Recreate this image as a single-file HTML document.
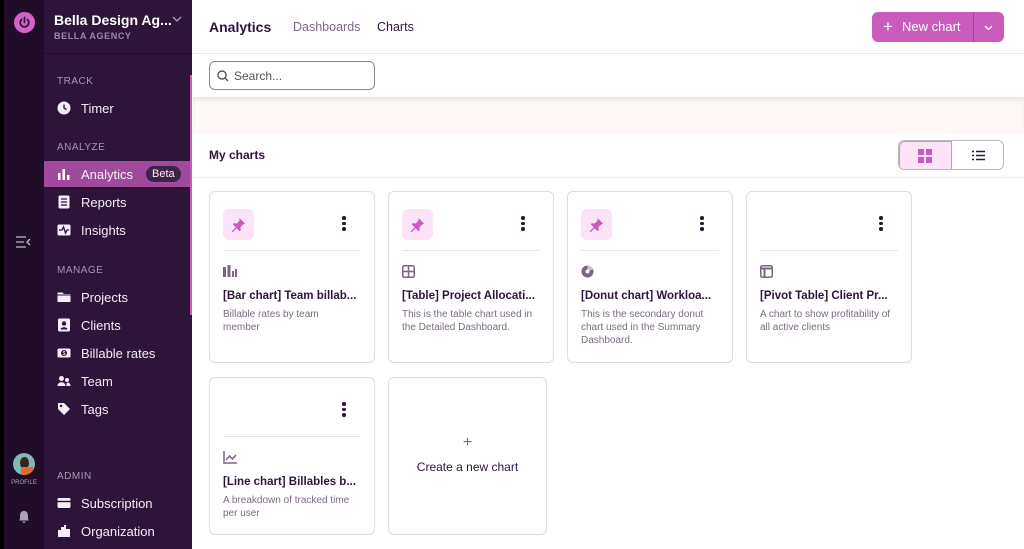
<!DOCTYPE html><html><head><style>
*{box-sizing:border-box;margin:0;padding:0}
body{width:1024px;height:549px;overflow:hidden;font-family:"Liberation Sans",sans-serif;background:#fff;position:relative}
.strip{position:absolute;left:0;top:0;width:4px;height:549px;background:#000}
.rail{position:absolute;left:4px;top:0;width:40px;height:549px;background:#200e29}
.side{position:absolute;left:44px;top:0;width:148px;height:549px;background:#2d1539;color:#fff}
.pl{position:absolute;left:190px;top:75px;width:2px;height:240px;background:#c95bbd}
.sec{position:absolute;left:13px;font-size:10px;color:#a898ad;letter-spacing:.5px}
.it{position:absolute;left:0;width:146px;height:26px;font-size:13px;color:#f4eef5;display:flex;align-items:center;padding-left:37px}
.it svg{position:absolute;left:13px;top:6px;width:14px;height:14px}
.main{position:absolute;left:193px;top:0;right:0;bottom:0}
.card{position:absolute;border:1px solid #ddd;border-radius:6px;background:#fff}
.pin{position:absolute;left:13px;top:17px;width:31px;height:31px;border-radius:6px;background:#fce3f8}
.pin svg{position:absolute;left:8px;top:8px}
.dots{position:absolute;right:28px;top:24px;width:4px}
.dots b{display:block;width:3.5px;height:3.5px;border-radius:50%;background:#2d1539;margin-bottom:2px}
.hr{position:absolute;left:13px;right:13px;top:58px;border-top:1px solid #e6e6e6}
.ic{position:absolute;left:13px;top:73px}
.tt{position:absolute;left:13px;top:98px;font-size:11.5px;font-weight:bold;color:#2d1539;white-space:nowrap}
.ds{position:absolute;left:13px;top:116px;width:135px;font-size:10px;line-height:13px;color:#7d6a82}
</style></head><body>
<div class="strip"></div>
<div class="rail">
<div style="position:absolute;left:10px;top:12px;width:21px;height:21px;border-radius:50%;background:#d463c8"><svg width="21" height="21" viewBox="0 0 21 21"><path d="M7.5 7.5a4.3 4.3 0 1 0 6 0" fill="none" stroke="#2d1539" stroke-width="1.8" stroke-linecap="round"/><path d="M10.5 5.5v5" stroke="#2d1539" stroke-width="1.8" stroke-linecap="round"/></svg></div>
<svg style="position:absolute;left:11px;top:236px" width="16" height="12"><path d="M1 1h10M1 6h8M1 11h10M15 3l-3 3 3 3" stroke="#bbb" stroke-width="1.3" fill="none"/></svg>
<div style="position:absolute;left:9px;top:453px;width:22px;height:22px;border-radius:50%;background:#7fb8b8;overflow:hidden"><div style="position:absolute;left:7px;top:4px;width:9px;height:12px;border-radius:50%;background:#3a2418"></div><div style="position:absolute;left:8px;top:14px;width:12px;height:10px;background:#e86a2a"></div></div>
<div style="position:absolute;left:0;width:40px;top:480px;text-align:center;font-size:6px;color:#b0a0b6">PROFILE</div>
<svg style="position:absolute;left:14px;top:510px" width="12" height="13"><path d="M6 1c-3 0-4 2-4 5v3l-1 1.5h10L10 9V6c0-3-1-5-4-5zM4.5 11.5h3a1.5 1.5 0 0 1-3 0z" fill="#b0a0b6"/></svg>
</div>
<div class="side">
<div style="position:absolute;left:10px;top:12px;font-size:14px;font-weight:bold">Bella Design Ag...</div>
<svg style="position:absolute;left:128px;top:16px" width="10" height="6"><path d="M1 1l4 4 4-4" stroke="#aaa" stroke-width="1.3" fill="none"/></svg>
<div style="position:absolute;left:10px;top:31px;font-size:9px;color:#9d8aa4;letter-spacing:.6px;font-weight:bold">BELLA AGENCY</div>
<div style="position:absolute;left:0;top:53px;width:148px;border-top:1px solid #1f0d28"></div>
<div class="sec" style="top:76px">TRACK</div>
<div class="it" style="top:95px"><svg viewBox="0 0 14 14"><circle cx="7" cy="7" r="6.5" fill="#f4eef5"/><path d="M7 3.5V7l2.5 1.5" stroke="#2d1539" stroke-width="1.4" fill="none"/></svg>Timer</div>
<div class="sec" style="top:142px">ANALYZE</div>
<div class="it" style="top:161px;background:#a04a9e"><svg viewBox="0 0 14 14"><path d="M1 6h2.5v7H1zM5.5 2h2.5v11H5.5zM10 8h2.5v5H10z" fill="#fff"/></svg>Analytics<span style="margin-left:13px;background:#3d2344;border-radius:8px;padding:2px 6px;font-size:11px">Beta</span></div>
<div class="it" style="top:189px"><svg viewBox="0 0 14 14"><rect x="1.5" y="0.5" width="11" height="13" rx="1.5" fill="#f4eef5"/><path d="M4 4h6M4 7h6M4 10h6" stroke="#2d1539" stroke-width="1.2"/></svg>Reports</div>
<div class="it" style="top:217px"><svg viewBox="0 0 14 14"><rect x="0.5" y="1.5" width="13" height="11" rx="1.5" fill="#f4eef5"/><path d="M2 7h3l1.5-3 2 6 1.5-3h2" stroke="#2d1539" stroke-width="1.3" fill="none"/></svg>Insights</div>
<div class="sec" style="top:265px">MANAGE</div>
<div class="it" style="top:284px"><svg viewBox="0 0 14 14"><path d="M0.5 2.5h5l1.5 1.5h6.5v8h-13z" fill="#f4eef5"/><path d="M0.5 5h13" stroke="#2d1539"/></svg>Projects</div>
<div class="it" style="top:312px"><svg viewBox="0 0 14 14"><rect x="1" y="0.5" width="12" height="13" rx="1.5" fill="#f4eef5"/><circle cx="7" cy="5.5" r="2.2" fill="#2d1539"/><path d="M3.5 11.5c0-3 7-3 7 0z" fill="#2d1539"/></svg>Clients</div>
<div class="it" style="top:340px"><svg viewBox="0 0 14 14"><rect x="0.5" y="2.5" width="13" height="9" rx="1.5" fill="#f4eef5"/><circle cx="7" cy="7" r="3" fill="#2d1539"/><text x="7" y="9" font-size="5" fill="#fff" text-anchor="middle">$</text></svg>Billable rates</div>
<div class="it" style="top:368px"><svg viewBox="0 0 14 14"><circle cx="4.5" cy="4.5" r="2.5" fill="#f4eef5"/><path d="M0.5 12c0-5 8-5 8 0z" fill="#f4eef5"/><circle cx="10" cy="6" r="2" fill="#f4eef5"/><path d="M9.5 12h4c0-3-2-4-4-3z" fill="#f4eef5"/></svg>Team</div>
<div class="it" style="top:396px"><svg viewBox="0 0 14 14"><path d="M1 1h6l6 6-6 6-6-6z" fill="#f4eef5"/><circle cx="4" cy="4" r="1.2" fill="#2d1539"/></svg>Tags</div>
<div class="sec" style="top:471px">ADMIN</div>
<div class="it" style="top:490px"><svg viewBox="0 0 14 14"><rect x="0.5" y="2" width="13" height="10" rx="1.5" fill="#f4eef5"/><path d="M0.5 5.5h13" stroke="#2d1539" stroke-width="1.5"/></svg>Subscription</div>
<div class="it" style="top:518px"><svg viewBox="0 0 14 14"><path d="M1 13V6h3V3h3V1h2v4h4v8z" fill="#f4eef5"/></svg>Organization</div>
</div>
<div class="pl"></div>
<div class="main">
<div style="position:absolute;left:16px;top:19px;font-size:14px;font-weight:bold;color:#2d1539">Analytics</div>
<div style="position:absolute;left:100px;top:20px;font-size:12.5px;color:#7d6a82">Dashboards</div>
<div style="position:absolute;left:184px;top:20px;font-size:12.5px;color:#2d1539">Charts</div>
<div style="position:absolute;left:679px;top:12px;width:132px;height:30px;border-radius:6px;background:#c95bbd;color:#fff;font-size:13px;line-height:30px">
<span style="position:absolute;left:11px;font-size:17px">+</span><span style="position:absolute;left:30px">New chart</span>
<span style="position:absolute;left:101px;top:0;height:30px;border-left:1px solid #a8439c"></span>
<svg style="position:absolute;left:112px;top:13px" width="9" height="6"><path d="M1 1l3.5 3.5L8 1" stroke="#fff" stroke-width="1.3" fill="none"/></svg></div>
<div style="position:absolute;left:0;right:0;top:53px;border-top:1px solid #e8e8e8"></div>
<div style="position:absolute;left:16px;top:61px;width:166px;height:29px;border:1px solid #888;border-radius:6px;font-size:12px;color:#555;padding:7px 0 0 24px">Search...<svg style="position:absolute;left:7px;top:8px" width="12" height="12"><circle cx="5" cy="5" r="4" stroke="#555" stroke-width="1.4" fill="none"/><path d="M8 8l3 3" stroke="#555" stroke-width="1.4"/></svg></div>
<div style="position:absolute;left:0;right:0;top:97px;height:36px;background:#fdf8f6;border-top:1px solid #e6e6e6;box-shadow:inset 0 3px 3px rgba(0,0,0,.05)"></div>
<div style="position:absolute;left:16px;top:148px;font-size:12px;font-weight:bold;color:#2d1539">My charts</div>
<div style="position:absolute;left:705px;top:140px;width:106px;height:30px;border:1px solid #bbb;border-radius:6px;overflow:hidden">
<div style="position:absolute;left:0;top:0;width:53px;height:30px;background:#fce3f8;border:1px solid #d98ad0;border-radius:6px 0 0 6px"></div>
<svg style="position:absolute;left:19px;top:8px" width="14" height="14"><rect x="0" y="0" width="6" height="6" fill="#c95bbd"/><rect x="8" y="0" width="6" height="6" fill="#c95bbd"/><rect x="0" y="8" width="6" height="6" fill="#c95bbd"/><rect x="8" y="8" width="6" height="6" fill="#c95bbd"/></svg>
<svg style="position:absolute;left:73px;top:9px" width="13" height="11"><path d="M0 1.5h2M4 1.5h9M0 5.5h2M4 5.5h9M0 9.5h2M4 9.5h9" stroke="#2d1539" stroke-width="1.5"/></svg>
</div>
<div style="position:absolute;left:0;right:0;top:177px;border-top:1px solid #eee"></div>

<svg width="0" height="0" style="position:absolute"><defs><symbol id="pin" viewBox="0 0 16 16"><path d="M9 1l6 6-2 1-3 3 .5 3-1.5 1-3-3-4 4H1v-1l4-4-3-3 1-1.5 3 .5 3-3z" fill="#c95bbd"/></symbol></defs></svg>
<div class="card" style="left:16px;top:191px;width:166px;height:172px"><div class="pin"><svg width="15" height="15"><use href="#pin"/></svg></div><div class="dots"><b></b><b></b><b></b></div><div class="hr"></div><svg class="ic" width="14" height="12"><path d="M0 2h3v10H0zM4.5 0h3v12h-3zM9 6h2v6H9zM12 4h2v8h-2z" fill="#7a6680"/></svg><div class="tt">[Bar chart] Team billab...</div><div class="ds">Billable rates by team member</div></div>
<div class="card" style="left:195px;top:191px;width:166px;height:172px"><div class="pin"><svg width="15" height="15"><use href="#pin"/></svg></div><div class="dots"><b></b><b></b><b></b></div><div class="hr"></div><svg class="ic" width="13" height="13"><rect x="0.75" y="0.75" width="11.5" height="11.5" rx="1.5" stroke="#7a6680" stroke-width="1.5" fill="none"/><path d="M6.5 1v11M1 6.5h11" stroke="#7a6680" stroke-width="1.5"/></svg><div class="tt">[Table] Project Allocati...</div><div class="ds">This is the table chart used in the Detailed Dashboard.</div></div>
<div class="card" style="left:374px;top:191px;width:166px;height:172px"><div class="pin"><svg width="15" height="15"><use href="#pin"/></svg></div><div class="dots"><b></b><b></b><b></b></div><div class="hr"></div><svg class="ic" width="13" height="13"><circle cx="6.5" cy="6.5" r="6" fill="#7a6680"/><circle cx="6.5" cy="6.5" r="2" fill="#fff"/><path d="M6.5 6.5L13 4V0H6.5z" fill="#fff" opacity=".6"/></svg><div class="tt">[Donut chart] Workloa...</div><div class="ds">This is the secondary donut chart used in the Summary Dashboard.</div></div>
<div class="card" style="left:553px;top:191px;width:166px;height:172px"><div class="dots"><b></b><b></b><b></b></div><div class="hr"></div><svg class="ic" width="13" height="13"><rect x="0.75" y="0.75" width="11.5" height="11.5" rx="1.5" stroke="#7a6680" stroke-width="1.5" fill="none"/><path d="M1 3.5h11M4.5 3.5v8.5" stroke="#7a6680" stroke-width="2"/></svg><div class="tt">[Pivot Table] Client Pr...</div><div class="ds">A chart to show profitability of all active clients</div></div>
<div class="card" style="left:16px;top:377px;width:166px;height:158px"><div class="dots"><b></b><b></b><b></b></div><div class="hr"></div><svg class="ic" width="14" height="13"><path d="M1 0v12h13M3 9l3.5-4 3 3L13 4" stroke="#7a6680" stroke-width="1.5" fill="none"/></svg><div class="tt">[Line chart] Billables b...</div><div class="ds">A breakdown of tracked time per user</div></div>
<div class="card" style="left:195px;top:377px;width:159px;height:158px;text-align:center"><div style="margin-top:56px;font-size:16px;color:#7d6a82">+</div><div style="margin-top:8px;font-size:12px;color:#2d1539">Create a new chart</div></div>
</div>
</body></html>
